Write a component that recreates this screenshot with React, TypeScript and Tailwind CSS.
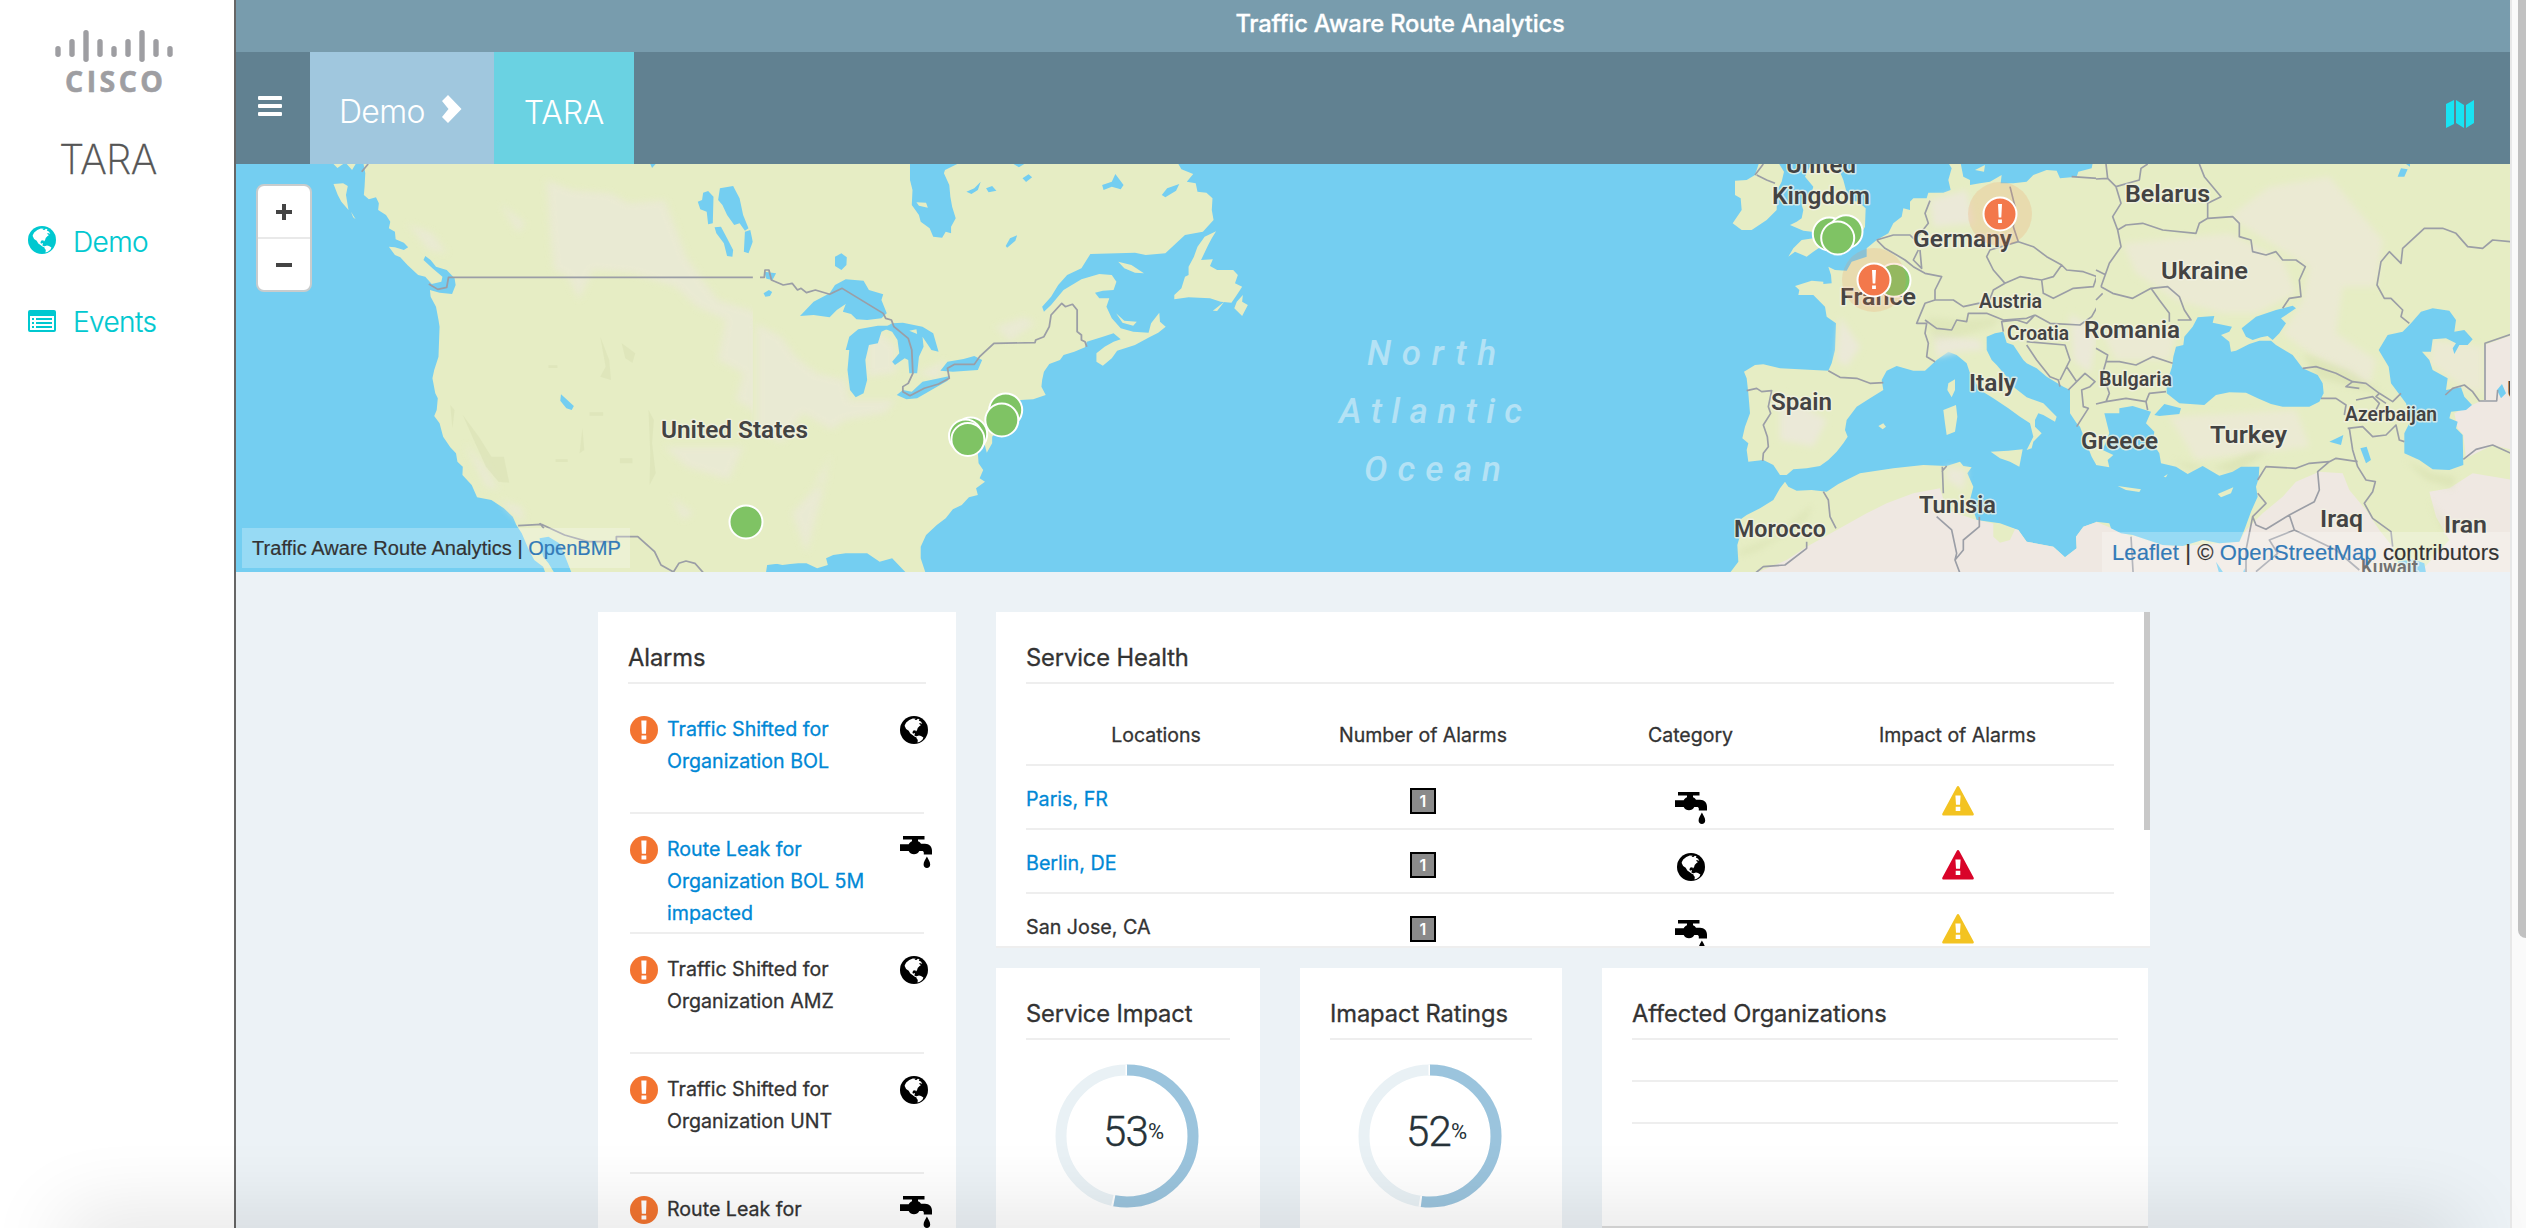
import React from "react";

const WATER = "#74cef1";
const LAND = "#e6edc4";
const BORDER = "#9b9ea6";

function Globe({ className }: { className: string }) {
  return (
    <svg viewBox="0 0 28 28" className={className}>
      <circle cx="14" cy="14" r="14" fill="currentColor" />
      <path fill="#fff" d="M4.700 9.200 6.200 6.400 9.300 4l3.500-1.500 3 .2-1.300 1.200 1.900.2 1.500-1.400 1.600.5-.7 1.300 2.300 1.200 1.200 2.200-1.600-.7-1.500-.3.600 1.500 1.200.6-1.700 1.300-1.600 1.700-.6 1.900-1.100 1.600-.7-1.200-1.900.3-1 1.600.6 1.500 1.700-.7.3 1.200-1 .9 1.700 1.200 2.200.2-.4 1-2.400-.5-2.600-1.900-2.200-1.500-1.600-2.800-2.600-1.900-1.300-2.700z" />
      <path fill="#fff" d="M16.600 20.300l2.400-.9 2 .6 2.400 1.400-1 2.300-2.600 2-2.300.7.300-2.500-1.400-1.900z" />
    </svg>
  );
}

function Faucet({ className }: { className: string }) {
  return (
    <svg viewBox="0 0 32 32" className={className} fill="#000">
      <path d="M3 0h21.500v3.600H18v1.700c1.600.6 2.300 1.400 3 2.400h4c4.500 0 7 3.200 7 7v3.800h-8.200v-1.900c0-1.200-.8-1.700-1.900-1.700h-2.600c-1.200 2.200-3 3.300-5.300 3.300s-4.200-1.100-5.300-3.300H0V8.200h8.700c.8-1 1.700-2.300 3.300-2.900V3.600H3z" />
      <path d="M26.900 20.500c1.600 3 3.300 5.400 3.300 7.900 0 2-1.400 3.600-3.300 3.600s-3.300-1.600-3.300-3.600c0-2.500 1.700-4.900 3.300-7.900z" />
    </svg>
  );
}

function Alert() {
  return (
    <svg viewBox="0 0 28 28" className="size-7 shrink-0">
      <circle cx="14" cy="14" r="14" fill="#f37430" />
      <path fill="#fff" d="M11.300 4.500h5.200l-.5 13.300h-4.200zM11.500 19.500h4.800v3.900h-4.800z" />
    </svg>
  );
}

function Warning({ color }: { color: string }) {
  return (
    <svg viewBox="0 0 32 30" className="h-[30px] w-8" fill={color}>
      <path d="M14.700.9c.6-1.100 2-1.100 2.600 0l14.300 26.600c.6 1.100-.1 2.100-1.200 2.100H1.600c-1.100 0-1.800-1-1.200-2.100z" />
      <path fill="#fff" d="M13.400 9.500h5.200l-.6 9.300h-4zM13.700 20.800h4.600v4.200h-4.600z" />
    </svg>
  );
}

function CiscoLogo() {
  const bars = [
    [4, 16, 11], [18, 9, 18], [32, 0, 32], [46, 9, 18], [60, 16, 11],
    [74, 9, 18], [88, 0, 32], [102, 9, 18], [116, 16, 11],
  ];
  return (
    <svg viewBox="0 0 120 72" className="h-[72px] w-[120px]" fill="#9e9ea2">
      {bars.map(([x, y, h]) => (
        <rect key={x} x={x - 2.700} y={y} width="5.400" height={h} rx="2.700" />
      ))}
      <text x="11" y="61.500" fontFamily="Open Sans" fontWeight="700" fontSize="28.500" stroke="#9e9ea2" strokeWidth=".6" textLength="98" lengthAdjust="spacing">
        CISCO
      </text>
    </svg>
  );
}

type Label = [string, number, number, number, number];

const labels: Label[] = [
  ["United States", 661, 437.500, 147, 24],
  ["United", 1786, 173, 70, 24],
  ["Kingdom", 1772, 204, 98, 24],
  ["Germany", 1913, 247, 99, 24],
  ["France", 1840, 305, 76, 24],
  ["Austria", 1979, 307.500, 63, 21],
  ["Croatia", 2007, 340, 62, 21],
  ["Romania", 2084, 338, 96, 24],
  ["Bulgaria", 2099, 385.500, 73, 21],
  ["Spain", 1771, 410, 61, 24],
  ["Italy", 1969, 391, 47, 24],
  ["Greece", 2081, 449, 77, 24],
  ["Turkey", 2210, 443, 77, 24],
  ["Tunisia", 1919, 513, 77, 24],
  ["Morocco", 1734, 537, 92, 24],
  ["Belarus", 2125, 202, 85, 24],
  ["Ukraine", 2161, 279, 87, 24],
  ["Azerbaijan", 2345, 421, 92, 21],
  ["Iraq", 2320, 527, 43, 24],
  ["Iran", 2444, 533, 43, 24],
  ["Kuwait", 2361, 574, 57, 20],
];

const greens = [
  [746, 522], [1005.700, 410], [1001.800, 420], [970.700, 434], [965.500, 436], [967.900, 439.500],
  [1829.300, 234], [1846, 231.700], [1837.700, 238], [1894, 280.300],
];

function WorldMap() {
  return (
    <svg viewBox="236 164 2274 408" className="block h-[408px] w-[2274px]" strokeLinejoin="round">
      <defs>
        <filter id="soft" x="-20%" y="-20%" width="140%" height="140%">
          <feGaussianBlur stdDeviation="10" />
        </filter>
      </defs>
      <rect x="236" y="164" width="2274" height="408" fill={WATER} />

      {/* Western North America */}
      <g transform="translate(236 160) scale(.35714 .33333)">
        <path fill={LAND} d="M355 0L362 40 360 80 358 105 372 118 392 112 400 130 398 150 420 165 432 185 428 205 445 215 447 238 470 248 482 262 470 270 445 262 428 260 445 285 460 292 480 315 510 345 530 350 548 372 575 365 578 350 550 325 525 300 530 288 545 300 560 320 590 330 612 355 615 375 605 402 570 398 543 390 545 410 560 440 567 480 570 500 567 590 555 630 550 655 558 700 565 715 562 750 555 768 570 790 580 830 600 862 616 880 620 905 635 920 634 945 660 975 675 1012 715 1020 750 1045 775 1070 785 1095 800 1120 820 1170 835 1200 860 1220 870 1250 1480 1250 1485 1215 1500 1208 1530 1215 1580 1208V0z" />
        <path fill={LAND} d="M273 72L300 70 313 78 308 105 315 150 295 125 285 105zM273 12L300 12 284 24zM310 12L335 12 325 30zM322 155L335 178 328 172z" />
        <g fill="#ebe9d8" opacity=".75" filter="url(#soft)">
          <path d="M870 60L940 90 1050 100 1100 130 1200 120 1240 230 1260 290 1300 350 1350 420 1440 450 1568 520V840L1460 760 1400 720 1420 640 1350 600 1370 480 1290 440 1230 380 1110 340 1000 330 960 420 930 350 890 330 880 220z" />
          <path d="M480 190L550 220 590 280 540 270zM640 850L700 920 735 990 700 980zM740 130L810 190 790 220zM1200 860L1420 860 1380 960 1260 920zM740 1020L800 1040 810 1090 770 1060zM1220 1010L1280 1060 1250 1080z" />
        </g>
        <g fill="#d9e0b4" opacity=".55">
          <path d="M635 765L680 830 715 890 750 890 765 968 735 965 700 920 670 850zM1020 530L1045 600 1050 660 1020 650 1035 620zM1080 550L1118 580 1110 608 1090 595zM970 805L975 870 962 880zM1155 750L1170 780 1165 850 1175 940 1158 975 1160 880zM600 735L612 750 606 805zM875 616h25v8h-25zM990 757h38v10h-38zM1075 895h35v15h-35zM895 898h34v8h-34z" />
        </g>
        <g fill={WATER}>
          <path d="M850 1135L875 1130 905 1150 920 1185 940 1240 892 1240 875 1210 860 1190 855 1165z" />
          <path d="M1355 85L1392 78 1410 115 1420 165 1435 205 1425 212 1410 190 1395 195 1375 165 1362 135 1350 120zM1293 125L1305 120 1308 98 1322 93 1337 110 1335 190 1322 193 1318 155 1300 148zM1340 202L1358 200 1375 235 1392 270 1390 290 1375 288 1366 250 1345 220zM1425 215L1440 210 1447 245 1435 280 1422 275zM1160 12L1175 12 1165 24zM910 703L946 738 940 750 925 745 908 722zM1480 395L1500 390 1500 402 1485 410 1477 405zM1480 340L1512 340 1500 360 1482 358z" />
        </g>
        <path fill="none" stroke={BORDER} strokeWidth="5" d="M540 372L565 388 590 382 595 352 1478 352 1480 330 1494 330 1500 360 1530 375 1555 368 1570 380M790 1097L855 1093 920 1125 985 1145 1065 1145 1065 1130 1125 1130 1172 1175 1190 1215 1225 1236 1240 1210 1260 1203 1285 1210 1310 1240M370 12L352 35M850 1090L862 1105" />
      </g>

      {/* Eastern North America */}
      <g transform="translate(760 160) scale(.35714 .33333)">
        <path fill={LAND} d="M1165 0L1180 28 1213 42 1195 65 1220 70 1225 95 1250 98 1267 115 1265 150 1270 180 1240 215 1190 225 1165 250 1135 280 1080 285 1050 278 925 282 900 325 860 345 835 375 815 410 790 440 795 455 815 435 850 390 900 358 950 342 985 345 998 365 990 390 960 392 938 398 950 415 978 415 970 440 985 475 1010 505 1045 515 1088 518 1095 490 1118 458 1120 485 1136 500 1115 518 1090 532 1050 555 1000 572 985 595 960 617 942 605 942 580 965 560 990 545 1010 538 990 520 960 530 915 545 910 562 880 575 850 585 840 600 810 612 795 635 790 660 788 680 800 705 765 718 730 720 700 740 680 800 650 830 650 850 635 878 628 850 610 880 612 910 625 930 615 955 630 965 605 985 610 1005 585 1012 565 1035 540 1048 520 1075 495 1095 465 1125 450 1160 450 1195 467 1250 415 1245 370 1195 335 1205 300 1180 240 1180 205 1185 185 1195 190 1215 160 1225 130 1210 60 1210 20 1215 15 1250H-20V0z" />
        <g fill="#ebe9d8" opacity=".75" filter="url(#soft)">
          <path d="M-10 490L60 530 100 590 160 640 240 660 250 720 380 720 350 760 240 780 200 810 120 760 60 850 -10 800zM660 500L740 470 770 490 700 545zM440 640L520 600 500 660zM300 540L340 520 380 560 380 640 300 650zM200 880L150 980 170 990zM90 1060L190 940 130 1180z" />
        </g>
        <g fill={LAND}>
          <path d="M1245 230L1277 214 1265 235 1255 255 1235 300 1268 298 1260 318 1280 330 1325 330 1338 345 1330 370 1350 380 1335 405 1320 428 1290 425 1260 415 1200 412 1160 418 1160 405 1180 385 1190 350 1200 345 1200 320 1215 290 1225 260zM1352 405L1350 425 1366 435 1350 468 1328 445 1335 425zM1003 305L1040 315 1075 340 1050 338 1020 325zM997 460L1020 482 1055 485 1045 497 1015 488zM1268 452L1300 425 1280 453z" />
        </g>
        <g fill={WATER}>
          <path d="M420 0L420 60 427 90 425 135 445 165 450 185 475 205 485 230 510 233 520 215 535 220 535 200 548 175 538 140 533 110 530 75 515 40 518 30 560 8z" />
          <path d="M112 468L150 425 195 400 210 375 240 358 290 362 305 390 345 403 340 420 355 460 340 475 300 480 270 478 255 462 232 455 240 432 215 450 195 472 150 465z" />
          <path d="M240 570L250 530 275 508 330 497 375 497 340 515 330 550 305 555 295 600 300 660 290 700 268 712 252 690 245 630 250 570z" />
          <path d="M345 505L370 490 400 488 455 500 485 520 500 575 480 570 455 530 458 560 445 590 440 640 418 640 415 600 405 595 378 615 370 605 390 580 385 540 370 515z" />
          <path d="M383 705L400 690 425 695 455 665 532 648 525 662 480 690 440 715 410 718zM505 632L525 605 570 597 600 588 622 600 610 630 540 635z" />
          <path d="M210 290L228 280 243 292 242 315 228 330 210 318zM578 95L600 85 618 65 610 90 592 102zM633 85L650 78 662 92 640 97zM735 55L752 43 762 52 745 66zM958 75L985 65 995 42 1018 75 1010 88 985 80 962 90zM1125 105L1140 85 1174 72 1165 92 1135 112zM688 258L700 235 720 226 715 242 692 263zM10 400L25 390 34 396 28 408 15 410zM12 335L45 340 35 360 18 356zM710 12L740 12 725 22z" />
        </g>
        <path fill={LAND} d="M438 127L465 128 470 143 445 137zM418 512L438 508 440 522z" />
        <path fill="none" stroke={BORDER} strokeWidth="5" d="M0 352L12 352 14 330 25 330 32 360 65 375 90 370 105 390 115 385 130 398 155 390 195 403 230 385 345 460 352 475 368 480 375 500 415 535 425 570 428 640 415 670 400 680 400 695 420 707 460 685 500 672 530 655 525 625 545 613 600 613 615 590 655 550 770 548 772 540 795 530 810 500 815 465 845 430 855 440 875 433 888 450 888 515 900 525 900 540 910 545 915 560" />
      </g>

      {/* Western Europe and North Africa */}
      <g transform="translate(1680 160) scale(.33333)">
        <path fill={LAND} d="M240 0L290 0 312 35 305 65 292 90 290 150 260 180 215 210 185 210 158 190 185 150 182 115 165 105 165 62 200 60 225 45zM400 0L470 12 490 60 498 90 505 120 535 125 557 145 555 200 530 250 480 265 420 262 400 275 380 290 345 275 325 290 340 265 365 240 400 235 395 215 370 212 330 195 350 185 365 175 370 150 365 135 390 115 400 80 375 50z" />
        <path fill={LAND} d="M192 635L225 615 250 613 300 625 400 630 445 632 455 610 465 570 468 490 440 470 435 440 400 405 355 405 358 390 345 378 395 362 430 365 430 372 455 370 453 345 445 320 465 330 500 332 515 305 560 290 560 265 590 240 625 220 640 190 665 170 670 145 690 150 690 125 700 115 740 115 745 98 790 98 812 90 805 60 815 25 800 0 840 0 850 50 870 60 870 75 900 70 930 65 965 45 962 70 1000 70 1040 65 1060 45 1100 30 1130 32 1140 55 1190 50 1195 35 1235 25 1240 0H1252V920L1235 890 1225 865 1200 800 1190 790 1170 760 1170 690 1150 680 1100 650 1070 625 1040 610 1030 600 1000 555 980 548 970 515 945 520 920 530 920 570 935 600 950 615 980 650 1000 680 1040 712 1090 730 1130 770 1125 785 1090 765 1075 760 1065 780 1065 800 1085 820 1060 845 1055 865 1040 870 1060 830 1050 790 1020 770 985 745 940 715 900 690 870 640 860 610 830 585 805 575 770 600 735 632 700 632 650 618 620 632 605 660 610 690 570 715 530 740 500 780 495 810 503 830 490 850 470 875 445 900 420 918 380 925 340 928 320 945 300 945 280 915 250 900 205 905 200 870 205 850 187 835 195 800 210 760 205 700 200 655z" />
        <path fill={LAND} d="M932 875L985 872 1028 868 1018 920 990 905 960 895zM790 750L828 735 832 770 825 815 800 825 795 790zM805 670L825 658 825 690 815 712 802 690zM595 798L610 790 618 800 608 808zM885 30L915 15 912 35zM720 0L750 0 740 10z" />
        <path fill={LAND} d="M315 965L325 980 350 992 395 990 440 995 475 972 540 940 640 925 730 915 800 918 840 905 850 918 875 922 862 940 880 980 870 1020 890 1080 960 1090 1015 1110 1040 1145 1120 1160 1155 1192 1190 1165 1188 1130 1210 1100 1252 1085V1245H145L175 1205 172 1155 185 1110 165 1090 200 1065 240 1045 280 1020 300 985z" />
        <path fill="#efe8e2" d="M225 1240L320 1200 380 1160 470 1110 560 1060 620 1030 700 1000 780 985 800 1050 890 1080 930 1088 1015 1110 1040 1145 1120 1160 1155 1192 1190 1165 1188 1130 1210 1100 1252 1085V1245z" />
        <path fill={LAND} d="M940 1090L1005 1108 990 1140 960 1148 940 1130z" />
        <g fill="#ebe9d8" filter="url(#soft)">
          <path d="M760 520L900 540 910 570 830 575 770 590zM300 700L440 780 400 860 300 840zM1170 460L1252 520 1230 640 1180 600zM480 470L540 560 500 620 470 600zM750 120L860 90 880 190 760 200zM800 920L860 930 850 990 800 960z" />
        </g>
        <g fill="#d5deac" opacity=".4" filter="url(#soft)">
          <path d="M740 470L840 480 960 470 940 500 840 530 760 540zM180 1170L280 1130 400 1030 380 1080 240 1170 180 1190z" />
        </g>
        <path fill="none" stroke={BORDER} strokeWidth="5" d="M445 632L480 652 530 655 570 670 610 668M200 692L230 685 245 695 275 692 265 740 272 760 250 795 262 830 265 860 250 880 248 903M590 240L615 265 650 285 675 300 700 320 735 340 785 350 765 390 765 420 735 430 710 490 740 490 735 520 745 550 740 590 765 605M590 240L640 225 690 225 705 240 745 190 735 160 750 122M715 270L700 300 725 325 720 270M735 480L770 505 815 510 830 480 860 485 865 460 920 460 970 480 1040 475 1065 465M765 420L820 420 850 440 895 430 925 430 940 390 975 370 940 330 920 290 930 270 1015 245 1000 200 1005 140 990 80M1015 245L1060 260 1100 290 1145 315 1120 350 1085 360 1020 350 975 370M1085 360L1090 400 1120 415 1180 385 1240 380 1250 350M1145 315L1160 330 1210 335 1252 350M1065 465L1040 490 1010 480 965 485 970 515M1065 465L1110 490 1200 495 1235 470 1252 440M1040 555L1070 600 1110 650 1135 660 1140 680M1040 545L1155 555 1170 600 1160 620 1190 665 1215 640 1245 665 1230 680 1205 690 1210 740 1225 745 1190 800M1160 620L1140 660M1190 665L1165 690M230 45L260 60 285 70M225 45L250 12M787 920L790 1000M800 918L785 935M770 1070L815 1110 830 1180 825 1200 840 1240M898 1070L898 1100 850 1140 850 1170 825 1200M430 995L445 1020 450 1070 468 1105M380 1145L380 1165 315 1215 250 1220 225 1240M1175 50L1252 55" />
      </g>

      {/* Eastern Europe and the Middle East */}
      <g transform="translate(2096 100) scale(.33333)">
        <rect x="0" y="180" width="1250" height="1250" fill={LAND} />
        <g fill="#ebead3" filter="url(#soft)">
          <path d="M400 350L520 260 700 230 860 420 840 560 740 560 720 700 840 780 820 860 640 760 560 700 620 600 640 500 540 440zM80 430L400 400 560 480 600 580 480 640 380 640 240 600 120 520zM20 700L240 700 220 780 60 780zM1010 720L1160 740 1160 880 1100 860 1000 790zM220 950L600 930 640 1040 300 1080z" />
        </g>
        <g fill="#efe8e2">
          <path d="M1165 735L1250 705V1050L1190 1035 1110 1075 1102 1005 1085 985 1075 940 1128 915 1150 905 1165 900zM500 1240L560 1190 600 1145 670 1115 740 1120 760 1170 810 1230 850 1290 890 1340 900 1430H110L110 1305 200 1335 260 1338 370 1330 430 1325 450 1290 470 1270zM1000 1175L1060 1165 1130 1120 1250 1140V1430H960L1060 1320 1020 1250zM0 1265L60 1290 110 1310V1430H0z" />
        </g>
        <g fill="#d5deac" opacity=".5" filter="url(#soft)">
          <path d="M620 760L760 810 860 880 800 870 660 830zM930 1080L1010 1120 1080 1130 1070 1165 990 1140zM230 1080L280 1110 360 1100 460 1060 520 1050 420 1120zM1000 1200L1060 1290 1040 1290z" />
        </g>
        <g fill={WATER}>
          <path d="M355 648L305 652 290 680 265 710 262 735 240 740 232 770 228 800 212 850 212 880 250 910 325 915 360 885 400 877 450 878 485 895 525 912 560 920 640 920 670 905 683 880 680 850 665 825 620 805 590 765 540 735 525 722 490 722 460 732 420 752 405 755 400 725 375 705 400 695 408 680 350 668zM437 685L450 710 470 720 495 712 515 708 530 720 550 700 570 670 555 655 600 625 590 617 540 630 480 650z" />
          <path d="M848 750L875 705 920 695 945 670 975 635 1010 625 1060 632 1080 660 1075 695 1105 690 1130 718 1115 735 1090 735 1075 762 1070 745 1080 730 1050 715 1010 718 1005 755 978 755 1000 780 1010 810 1055 835 1050 870 1095 862 1105 890 1128 915 1110 930 1065 935 1060 955 1085 965 1080 985 1100 1005 1102 1095 1060 1110 1010 1108 970 1080 925 1060 925 1000 945 960 930 910 885 850 878 800z" />
          <path d="M175 945L205 912 255 925 250 942 190 948zM25 940L70 940 70 925 110 918 165 935 150 970 175 995 170 1030 190 1060 195 1090 240 1100 275 1122 320 1098 370 1127 410 1115 435 1100 490 1100 488 1135 480 1160 485 1190 465 1235 445 1290 430 1325 370 1330 320 1320 260 1338 200 1335 110 1305 75 1300 45 1285 40 1270 0 1265V1095L40 1102 35 1080 52 1065 20 1050 40 1000z" />
          <path d="M700 1025L742 1005 735 1035zM793 1045L812 1040 825 1080 810 1090zM905 230L915 205 935 208 925 230zM930 192H942V200zM905 1385L950 1378 985 1390 992 1430H930zM360 1385L390 1430H372zM1203 870L1218 852 1230 880 1215 895zM445 1405L450 1430H438z" />
        </g>
        <path fill={LAND} d="M65 1158L135 1168 130 1176 90 1170zM365 1182L412 1162 405 1180 375 1192zM203 1130L215 1122 210 1132z" />
        <path fill="none" stroke={BORDER} strokeWidth="5" d="M0 237L35 235 30 192M35 235L60 260 75 310 50 350 65 390 75 440 40 490 15 560M60 260L130 240 135 205 155 192M310 192L325 230 350 260 375 290 335 310 335 355M65 390L90 375 140 370 200 390 300 400 310 370 335 355 410 350 430 370 430 410 465 420 470 455 510 465 540 455 560 480 600 480 628 500 610 540 615 590 580 595 560 625M0 510L30 525M15 560L50 580 110 595 165 565 215 560 250 590 265 630 285 660 245 660M165 565L190 600 220 640 220 665M0 600L20 580M0 745L35 765 30 785 70 785 120 795 170 770 230 790M30 785L20 820 40 880 30 905 90 895 150 905 160 880 210 875M30 905L0 912M150 905L155 930M620 805L660 800 720 820 770 845 810 850 850 880 890 905 915 880M675 895L720 895 750 915 745 945M770 845L750 860 790 865M780 900L830 890 850 910 840 930M850 880L840 890 870 910M755 985L800 980 830 1010 870 1005 900 975 910 1020 925 1025M760 985L770 1050 785 1100 810 1140 838 1145 830 1175 805 1210 830 1255 885 1295 890 1340M485 1140L510 1100 600 1105 640 1090 700 1085 720 1075 785 1085M700 1085L665 1115 670 1170 655 1205 580 1245 510 1288 480 1275 470 1250 510 1210 485 1180M580 1245L595 1290 720 1350 790 1410M595 1290L520 1320 545 1360 480 1415M470 1250L450 1350 450 1416M940 670L915 650 920 630 885 595 865 595 843 555 855 485 880 455 915 490 920 445 985 385 1040 385 1080 400 1115 440 1160 445 1190 420 1245 425M1048 885L1070 865 1105 855 1130 875 1150 903H1202L1205 870M1167 900V730L1245 703M1102 1078L1140 1048 1190 1035 1245 1060M105 1310L112 1430" />
      </g>

      <g fontFamily="Roboto" fontWeight="600" fill="#434343" stroke="#f2f2e4" strokeWidth="3" strokeOpacity=".75" paintOrder="stroke">
        {labels.map(([name, x, y, width, size]) => (
          <text key={name} x={x} y={y} fontSize={size} textLength={width} lengthAdjust="spacingAndGlyphs">
            {name}
          </text>
        ))}
      </g>
      <text x="2507" y="398" fontFamily="Roboto" fontWeight="500" fontSize="24" fill="#434343">U</text>
      <g fontFamily="Roboto" fontStyle="italic" fontWeight="500" fontSize="35" fill="#b4e2f5">
        <text x="1367" y="365" textLength="129">North</text>
        <text x="1339" y="423" textLength="183">Atlantic</text>
        <text x="1364" y="481" textLength="137">Ocean</text>
      </g>

      <g fill="#7fc364" stroke="#fff" strokeWidth="2">
        {greens.map(([x, y]) => (
          <circle key={`${x}-${y}`} cx={x} cy={y} r="16.500" />
        ))}
      </g>
      {[[1874, 280], [2000, 214]].map(([x, y]) => (
        <g key={x}>
          <circle cx={x} cy={y} r="32" fill="#f58a4b" fillOpacity=".18" />
          <circle cx={x} cy={y} r="16.500" fill="#f3784b" stroke="#fff" strokeWidth="2" />
          <path fill="#fff" d={`M${x - 2} ${y - 10}h4l-.7 13.500h-2.600zM${x - 1.900} ${y + 5.500}h3.800v3.500h-3.800z`} />
        </g>
      ))}
    </svg>
  );
}

function CardTitle({ children }: { children: React.ReactNode }) {
  return (
    <h2 className="h-[72px] border-b-2 border-[#eee] pt-[30px] text-[23.700px] leading-8 tracking-[-0.1px] whitespace-nowrap text-[#333] [-webkit-text-stroke:0.300px_#333]">
      {children}
    </h2>
  );
}

function Ring({ value }: { value: number }) {
  const r = 66;
  const length = 2 * Math.PI * r;
  return (
    <div className="relative mx-auto mt-6 size-[144px] -translate-x-px">
      <svg viewBox="0 0 144 144" className="size-full -rotate-90" fill="none" strokeWidth="11">
        <circle cx="72" cy="72" r={r} stroke="#e9f1f5" />
        <circle cx="72" cy="72" r={r} stroke="#fff" strokeDasharray={`${(length * value) / 100 + 2} ${length}`} />
        <path d="M133 72h10" stroke="#fff" strokeWidth="3" />
        <circle cx="72" cy="72" r={r} stroke="#9bc4dd" strokeDasharray={`${(length * value) / 100} ${length}`} />
      </svg>
      <div className="absolute top-[43px] left-[48px] flex items-center leading-[50px] text-[#263238]">
        <span className="font-[Roboto] text-[42px] font-light tracking-[-0.800px] [-webkit-text-stroke:0.400px_#263238]">{value}</span>
        <span className="font-[Roboto] text-[22px]">%</span>
      </div>
    </div>
  );
}

const alarms = [
  { text: "Traffic Shifted for Organization BOL", link: true, icon: "globe" },
  { text: "Route Leak for Organization BOL 5M impacted", link: true, icon: "faucet" },
  { text: "Traffic Shifted for Organization AMZ", link: false, icon: "globe" },
  { text: "Traffic Shifted for Organization UNT", link: false, icon: "globe" },
  { text: "Route Leak for Organization", link: false, icon: "faucet" },
];

const services = [
  { place: "Paris, FR", link: true, icon: "faucet", color: "#f3c321" },
  { place: "Berlin, DE", link: true, icon: "globe", color: "#d90429" },
  { place: "San Jose, CA", link: false, icon: "faucet", color: "#f3c321" },
];

export default function App() {
  return (
    <div className="relative flex h-[1228px] w-[2526px] overflow-hidden bg-white font-[Inter,sans-serif]">
      <aside className="flex w-[236px] shrink-0 flex-col border-r-2 border-[#666] bg-white">
        <div className="mt-[30px] ml-[54px] h-16">
          <CiscoLogo />
        </div>
        <div className="mt-[40px] ml-[59px] text-[40.500px] leading-[52px] font-extralight tracking-[-0.700px] text-[#555] [-webkit-text-stroke:0.400px_#555]">TARA</div>
        <nav className="text-[28px] leading-10 font-light tracking-[-0.6px] text-[#00c8d0] [-webkit-text-stroke:0.200px_#00c8d0]">
          <div className="mt-[36px] ml-7 flex h-10">
            <Globe className="mt-[4px] size-7" />
            <span className="ml-[17px]">Demo</span>
          </div>
          <div className="mt-10 ml-7 flex h-10">
            <svg viewBox="0 0 28 22" className="mt-[8px] h-[22px] w-7">
              <path fill="currentColor" fillRule="evenodd" d="M2 0h24a2 2 0 0 1 2 2v18a2 2 0 0 1-2 2H2a2 2 0 0 1-2-2V2a2 2 0 0 1 2-2zm0 6v14h24V6z" />
              <path stroke="currentColor" strokeWidth="2" d="M4 9h2m2 0h16M4 13h2m2 0h16M4 17h2m2 0h16" />
            </svg>
            <span className="ml-[17px]">Events</span>
          </div>
        </nav>
      </aside>

      <main className="flex w-[2274px] shrink-0 flex-col bg-[#ecf2f6]">
        <div className="flex h-[52px] items-center justify-center bg-[#789cad] pb-[4px] pl-[54px] text-[23.700px] font-medium tracking-[-0.150px] text-white [-webkit-text-stroke:0.300px_#fff]">
          Traffic Aware Route Analytics
        </div>
        <header className="flex h-28 bg-[#618191] text-[32px] font-light text-white">
          <div className="flex w-[74px] flex-col gap-1 pt-11 pl-[22px]">
            <span className="h-1 w-6 rounded-[1px] bg-white" />
            <span className="h-1 w-6 rounded-[1px] bg-white" />
            <span className="h-1 w-6 rounded-[1px] bg-white" />
          </div>
          <div className="flex w-[184px] items-center bg-[#a0c7de] pt-[7px] pl-[29px] tracking-[-0.7px]">
            <span className="w-[103px]">Demo</span>
            <svg viewBox="0 0 20 28" className="h-7 w-5 -translate-y-[3px]" fill="#fff">
              <path d="M6 0l13.500 14L6 28 0 22l6.500-8L0 6z" />
            </svg>
          </div>
          <div className="flex w-[140px] items-center justify-center bg-[#6ad2e2] pt-[9px] tracking-[-0.100px]">TARA</div>
          <svg viewBox="0 0 28 28" className="mt-12 mr-9 ml-auto size-7" fill="#19e3f3">
            <path d="M0 4l8-4v24l-8 4zM10 0l8 5v23l-8-5zM20 5l8-5v23l-8 5z" />
          </svg>
        </header>

        <section className="relative h-[408px]">
          <WorldMap />
          <div className="absolute top-5 left-5 flex h-[108px] w-14 flex-col rounded-lg border-2 border-[#c8cccd] bg-white">
            <div className="flex h-[53px] items-center justify-center border-b-2 border-[#e9e9e9]">
              <svg viewBox="0 0 16 16" className="size-4"><path stroke="#444" strokeWidth="4" d="M0 8h16M8 0v16" /></svg>
            </div>
            <div className="flex h-[51px] items-center justify-center">
              <svg viewBox="0 0 16 16" className="size-4"><path stroke="#444" strokeWidth="4" d="M0 8h16" /></svg>
            </div>
          </div>
          <div className="absolute bottom-1 left-[6px] flex h-10 w-[388px] items-center bg-white/25 pl-[10px] font-['Liberation_Sans'] text-[20px] tracking-[0.040px] whitespace-pre text-[#333] [-webkit-text-stroke:0.200px]">
            Traffic Aware Route Analytics | <span className="text-[#337ab7]">OpenBMP</span>
          </div>
          <div className="absolute right-0 bottom-0 flex h-10 w-[408px] items-center bg-white/25 pl-[10px] font-['Liberation_Sans'] text-[22px] tracking-[0.120px] whitespace-pre text-[#333] [-webkit-text-stroke:0.200px]">
            <span className="text-[#337ab7]">Leaflet</span> | © <span className="text-[#337ab7]">OpenStreetMap</span> contributors
          </div>
        </section>

        <section className="flex h-[656px] gap-10 overflow-hidden pt-10 pl-[362px]">
          <div className="h-[700px] w-[358px] shrink-0 bg-white px-[30px]">
            <CardTitle>Alarms</CardTitle>
            <ul className="mx-[2px] pt-[10px]">
              {alarms.map((a, i) => (
                <li key={i} className="flex h-[120px] border-b-2 border-[#eee] pt-[22px]">
                  <Alert />
                  <span className={`-mt-[3px] ml-[9px] w-[220px] text-[19.600px] leading-8 [-webkit-text-stroke:0.300px] ${a.link ? "text-[#0088d6]" : "text-[#333]"}`}>
                    {a.text}
                  </span>
                  {a.icon === "globe" ? (
                    <Globe className="-mr-1 ml-auto size-7 shrink-0 text-black" />
                  ) : (
                    <Faucet className="-mr-2 ml-auto size-8 shrink-0" />
                  )}
                </li>
              ))}
            </ul>
          </div>

          <div className="w-[1154px] shrink-0">
            <div className="flex h-[336px] overflow-hidden border-b-2 border-[#eee] bg-white pl-[30px]">
              <div className="w-[1088px]">
                <CardTitle>Service Health</CardTitle>
                <div className="grid h-[82px] grid-cols-[260px_274px_261px_273px] border-b-2 border-[#eee] pt-[35px] text-center text-[19.500px] leading-8 text-[#333] [-webkit-text-stroke:0.300px_#333]">
                  <span>Locations</span>
                  <span>Number of Alarms</span>
                  <span>Category</span>
                  <span>Impact of Alarms</span>
                </div>
                {services.map((s) => (
                  <div key={s.place} className="grid h-16 grid-cols-[260px_274px_261px_273px] justify-items-center border-b-2 border-[#eee]">
                    <span className={`mt-[17px] justify-self-start text-[19.700px] leading-8 [-webkit-text-stroke:0.300px] ${s.link ? "text-[#0088d6]" : "text-[#333]"}`}>{s.place}</span>
                    <span className="mt-[22px] flex size-[26px] items-center justify-center border-2 border-black bg-[#8a8a8a] text-[16px] font-semibold text-white">1</span>
                    {s.icon === "globe" ? <Globe className="mt-[23px] size-7 text-black" /> : <Faucet className="mt-[26px] size-8" />}
                    <span className="mt-5">
                      <Warning color={s.color} />
                    </span>
                  </div>
                ))}
              </div>
              <div className="ml-auto h-[218px] w-[6px] bg-[#c8c8c8]" />
            </div>
            <div className="mt-5 flex">
              <div className="h-[300px] w-[264px] bg-white px-[30px]">
                <CardTitle>Service Impact</CardTitle>
                <Ring value={53} />
              </div>
              <div className="ml-10 h-[300px] w-[262px] bg-white px-[30px]">
                <CardTitle>Imapact Ratings</CardTitle>
                <Ring value={52} />
              </div>
              <div className="ml-10 h-[260px] w-[546px] border-b-2 border-[#ddd] bg-white px-[30px]">
                <CardTitle>Affected Organizations</CardTitle>
                <div className="h-[42px] border-b-2 border-[#eee]" />
                <div className="h-[42px] border-b-2 border-[#eee]" />
              </div>
            </div>
          </div>
        </section>
      </main>

      <div className="flex w-4 shrink-0 justify-end border-l-2 border-[#e8e8e8] bg-[#fafafa]">
        <div className="h-[938px] w-2 rounded-bl-lg bg-[#c1c1c1]" />
      </div>

      <div className="pointer-events-none absolute top-full right-[76px] left-[76px] h-10 shadow-[0_0_80px_12px_rgba(0,0,0,0.120)]" />
    </div>
  );
}
